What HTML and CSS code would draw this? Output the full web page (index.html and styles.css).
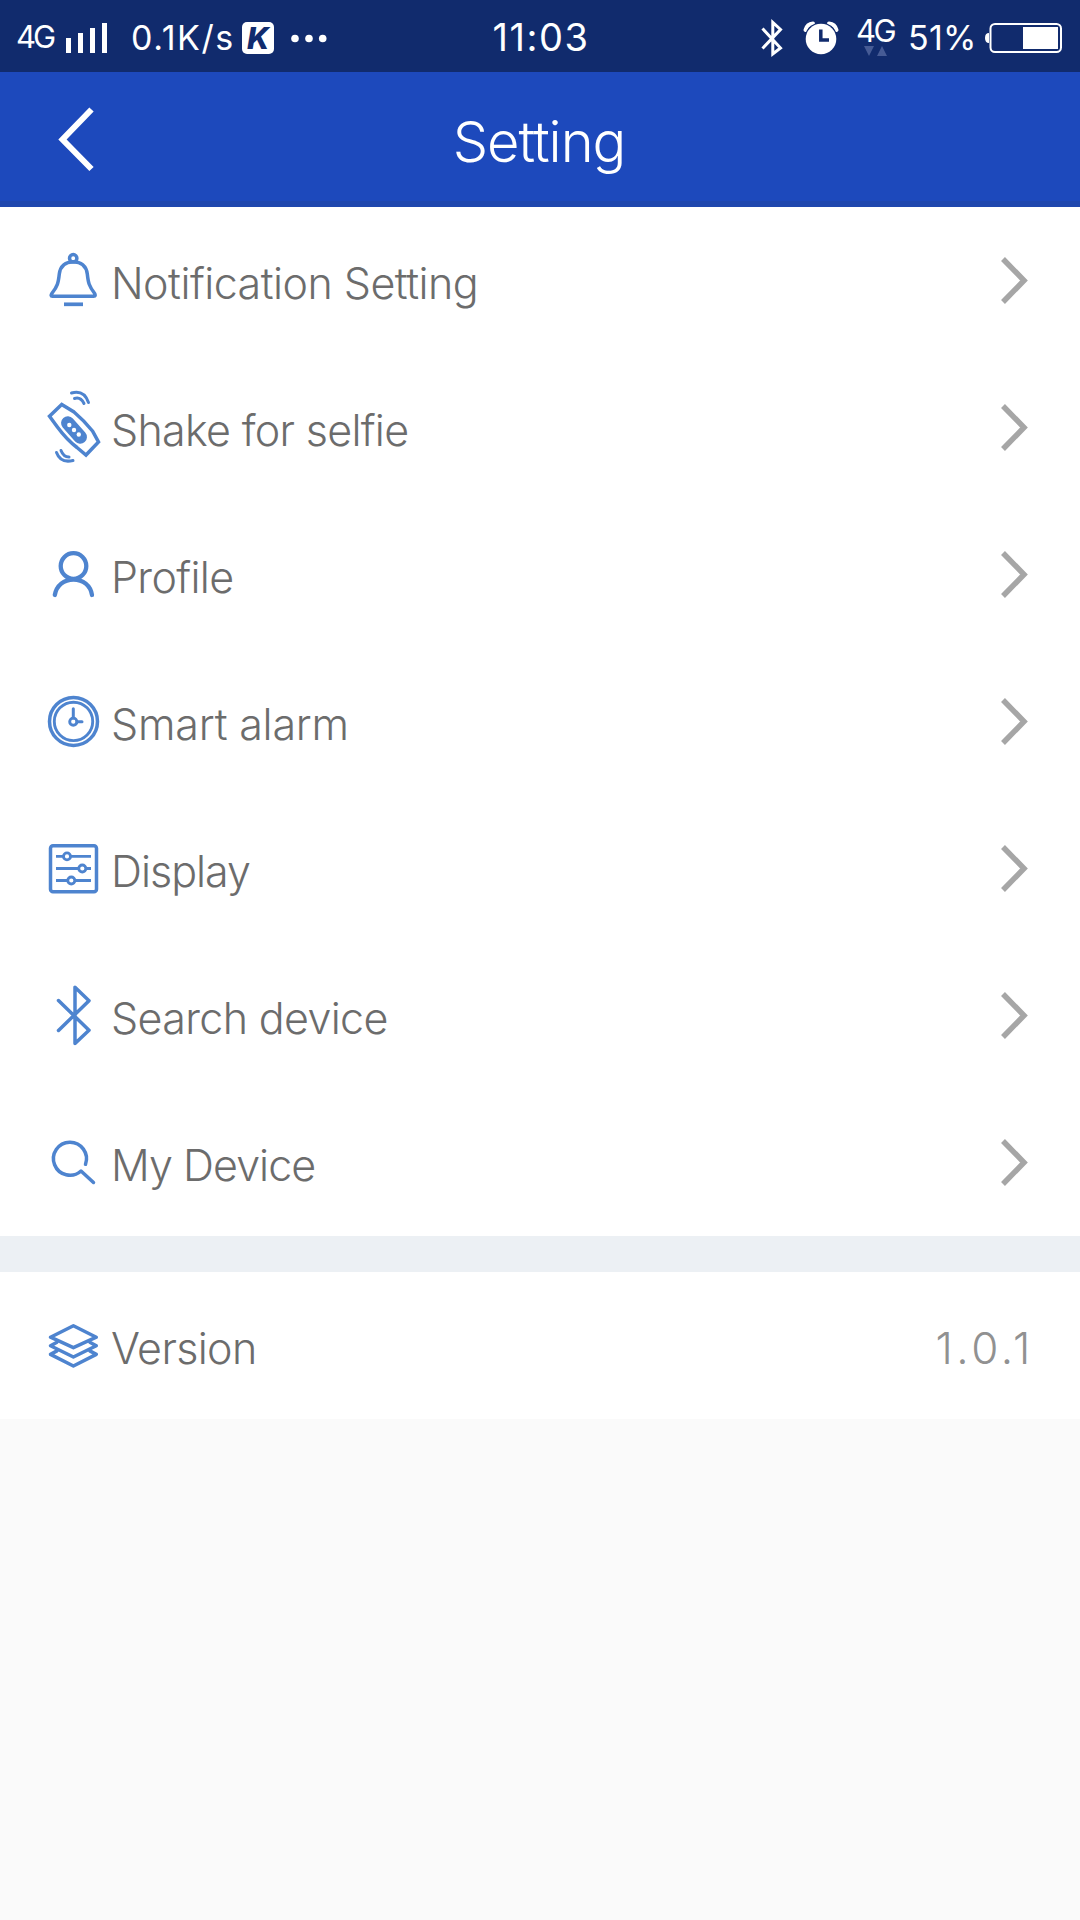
FILE: index.html
```html
<!DOCTYPE html>
<html lang="en">
<head>
    <meta charset="UTF-8">
    <meta name="viewport" content="width=device-width, initial-scale=1.0">
    <title>Setting</title>
    <link rel="stylesheet" href="styles.css">
</head>
<body>
    <div class="status-bar">
        <div class="status-left">
            <span class="network">4G</span>
            <svg class="signal" width="42" height="72" viewBox="0 0 42 72">
                <path d="M0 36h5v15H0zM12 31h5v20h-5zM24 26h5v25h-5zM36 21h5v30h-5z" fill="#fff"/>
            </svg>
            <span class="speed">0.1K/s</span>
            <span class="k-badge">K</span>
            <svg class="dots" width="36" height="72" viewBox="0 0 36 72" fill="#fff">
                <circle cx="4" cy="36.5" r="3.8"/>
                <circle cx="18" cy="36.5" r="3.8"/>
                <circle cx="31.7" cy="36.5" r="3.8"/>
            </svg>
        </div>
        <span class="time">11:03</span>
        <div class="status-right">
            <svg class="bt" width="24" height="72" viewBox="0 0 24 72" fill="none" stroke="#fff" stroke-width="3">
                <path d="M1.500 26.500L19.500 46 11.800 52V20.500L19.500 27.500 1.500 46.500"/>
            </svg>
            <svg class="alarm" width="36" height="72" viewBox="0 0 36 72">
                <path d="M2.500 28Q4 22 10 21.500M33.500 28Q32 22 26 21.500" fill="none" stroke="#fff" stroke-width="4" stroke-linecap="round"/>
                <circle cx="18" cy="37" r="16.500" fill="#112b6d"/>
                <circle cx="18" cy="37" r="15.300" fill="#fff"/>
                <path d="M17.800 27.500V38H26" fill="none" stroke="#112b6d" stroke-width="3.500"/>
            </svg>
            <div class="data">
                <span>4G</span>
                <svg width="24" height="10" viewBox="0 0 24 10" fill="#465b95">
                    <path d="M0 0h10L5 10zM13 10h10L18 0z"/>
                </svg>
            </div>
            <span class="percent">51%</span>
            <svg class="battery" width="78" height="72" viewBox="0 0 78 72">
                <path d="M4 31Q0 31 0 36t4 5z" fill="#fff"/>
                <rect x="5.500" y="22" width="70.500" height="28" rx="4.500" fill="none" stroke="#fff" stroke-width="2"/>
                <rect x="38" y="25" width="35" height="22" fill="#fff"/>
            </svg>
        </div>
    </div>

    <div class="header">
        <svg class="back" width="40" height="70" viewBox="0 0 40 70" fill="none" stroke="#fff" stroke-width="6">
            <path d="M35.500 5.500L6.500 35.500l29 29.500"/>
        </svg>
        <h1>Setting</h1>
    </div>

    <div class="list">
        <div class="row">
            <svg class="icon" viewBox="0 0 60 81">
                <circle cx="30.200" cy="18.300" r="3.700"/>
                <path d="M9.500 56.300H50.500C52.500 56.300 52.800 55.300 51.500 53.300C46 46 45.300 43 44.300 34C43.300 26 38 21.700 30.300 21.700S17.300 26 16.300 34C15.300 43 14.500 46 9 53.300C7.700 55.300 7.800 56.300 9.500 56.300z"/>
                <path d="M21 64.300h19" stroke-linecap="butt" stroke-width="3.700"/>
            </svg>
            <span class="label notification">Notification Setting</span>
            <svg class="arrow" viewBox="0 0 30 51"><path d="M3 4l21 21.500L3 47"/></svg>
        </div>
        <div class="row">
            <svg class="icon" viewBox="0 0 60 81">
                <path d="M18.700 17.500L6.500 29.200L14 39.500Q24 53 34 60.500L43 68L55.500 55L49.500 44Q41 33.500 31 25z" stroke-linejoin="miter"/>
                <path d="M24.800 36L37.200 50" stroke-width="13.500"/>
                <path d="M28.500 6Q41 2.500 45.500 15.500M31.500 11.500Q37.500 9.500 41 16.500M13.500 65.500Q17.500 76.500 30 73.500M18 63.500Q20.500 70 26 70" stroke-width="3"/>
                <g fill="#fff" stroke="none">
                    <circle cx="26.300" cy="38" r="2.200"/>
                    <circle cx="31" cy="43" r="2.200"/>
                    <circle cx="35.800" cy="47.500" r="2.200"/>
                </g>
            </svg>
            <span class="label shake">Shake for selfie</span>
            <svg class="arrow" viewBox="0 0 30 51"><path d="M3 4l21 21.500L3 47"/></svg>
        </div>
        <div class="row">
            <svg class="icon bold" viewBox="0 0 60 81">
                <circle cx="30.500" cy="32" r="12.800"/>
                <path d="M11.800 61C13.500 51.500 21 45.500 30.500 45.500S47.500 51.500 49 61"/>
            </svg>
            <span class="label profile">Profile</span>
            <svg class="arrow" viewBox="0 0 30 51"><path d="M3 4l21 21.500L3 47"/></svg>
        </div>
        <div class="row">
            <svg class="icon" viewBox="0 0 60 81">
                <circle cx="30.500" cy="40.400" r="24"/>
                <circle cx="30.500" cy="40.400" r="19.200" stroke-width="2.900"/>
                <circle cx="30.300" cy="40.700" r="3.600" stroke-width="2.900"/>
                <path d="M30.300 37V27.800M34 40.700h5" stroke-width="3"/>
            </svg>
            <span class="label smart">Smart alarm</span>
            <svg class="arrow" viewBox="0 0 30 51"><path d="M3 4l21 21.500L3 47"/></svg>
        </div>
        <div class="row">
            <svg class="icon" viewBox="0 0 60 81">
                <rect x="7.500" y="17.700" width="46" height="46" rx="2.500"/>
                <path d="M13 28.400h35M13 40.500h35M13 52.500h35" stroke-width="2.800" stroke-linecap="butt"/>
                <g fill="#fff" stroke-width="2.800">
                    <circle cx="24" cy="28.400" r="3.500"/>
                    <circle cx="39.300" cy="40.500" r="3.500"/>
                    <circle cx="28.300" cy="52.500" r="3.500"/>
                </g>
            </svg>
            <span class="label display">Display</span>
            <svg class="arrow" viewBox="0 0 30 51"><path d="M3 4l21 21.500L3 47"/></svg>
        </div>
        <div class="row">
            <svg class="icon" viewBox="0 0 60 81">
                <path d="M15.500 55.500L46 25.700L32 12.300V68.500L46 55.300L15.500 25.500"/>
            </svg>
            <span class="label search">Search device</span>
            <svg class="arrow" viewBox="0 0 30 51"><path d="M3 4l21 21.500L3 47"/></svg>
        </div>
        <div class="row">
            <svg class="icon" viewBox="0 0 60 81">
                <path d="M42.500 42.300A16.500 16.500 0 1 0 38 49L50.500 60.500"/>
            </svg>
            <span class="label device">My Device</span>
            <svg class="arrow" viewBox="0 0 30 51"><path d="M3 4l21 21.500L3 47"/></svg>
        </div>
    </div>

    <div class="list">
        <div class="row">
            <svg class="icon" viewBox="0 0 60 81">
                <path d="M30.400 20.700L53.300 32.200L30.400 42.700L7.500 32.200z"/>
                <path d="M14 37.200L7.500 40.700L30.400 52L53.300 40.700L46.800 37.200"/>
                <path d="M14 45.900L7.500 49.400L30.400 61L53.300 49.400L46.800 45.900"/>
            </svg>
            <span class="label version">Version</span>
            <span class="value">1.0.1</span>
        </div>
    </div>
</body>
</html>
```
FILE: styles.css
```css
* {
    box-sizing: border-box;
}
body {
    margin: 0;
    background: #fafafa;
    font-family: Inter, Roboto, sans-serif;
    color: #6c6c6c;
}
svg {
    display: block;
    flex-shrink: 0;
}
.status-bar {
    display: grid;
    grid-template-columns: 1fr auto 1fr;
    height: 72px;
    background: #112b6d;
    color: #fff;
    line-height: 72px;
    white-space: nowrap;
}
.status-left {
    display: flex;
    align-items: center;
    padding-left: 16px;
}
.status-right {
    display: flex;
    align-items: center;
    justify-content: flex-end;
    padding-right: 17px;
}
.network {
    width: 50px;
    height: 72px;
    font-size: 31px;
    letter-spacing: -3px;
    line-height: 69px;
}
.speed {
    width: 111px;
    margin-left: 23px;
    font-size: 34px;
    letter-spacing: 1.6px;
    line-height: 72px;
}
.k-badge {
    width: 32px;
    height: 32px;
    border-radius: 5px;
    background: #fff;
    color: #112b6d;
    font-size: 30px;
    font-weight: 800;
    font-style: italic;
    line-height: 32px;
    text-align: center;
}
.dots {
    margin-left: 17px;
}
.time {
    margin-left: 2px;
    font-size: 38px;
    letter-spacing: 1.5px;
    line-height: 75px;
}
.alarm {
    margin-left: 18px;
}
.data {
    width: 39px;
    margin-left: 17px;
    font-size: 31px;
    letter-spacing: -2.5px;
    line-height: 25px;
}
.data span {
    position: relative;
    top: -1px;
}
.data svg {
    margin-top: 2px;
    margin-left: 8px;
}
.percent {
    width: 68px;
    margin-left: 13px;
    font-size: 34px;
    letter-spacing: 0.3px;
    line-height: 72px;
}
.battery {
    margin-left: 9px;
}
.header {
    display: grid;
    grid-template-columns: 1fr auto 1fr;
    align-items: center;
    height: 135px;
    background: #1d49bc;
    border-bottom: 6px solid #1f47ae;
    color: #fff;
}
.back {
    margin-left: 56px;
    margin-top: 4px;
}
.header h1 {
    margin: 11px 2px 0 0;
    font-size: 56px;
    font-weight: 350;
    letter-spacing: -1px;
    line-height: 70px;
}
.list {
    margin-bottom: 36px;
    background: #fff;
    box-shadow: 0 36px 0 #ecf0f4;
}
.list:last-child {
    margin-bottom: 0;
    box-shadow: none;
}
.row {
    display: flex;
    align-items: center;
    height: 147px;
    padding: 0 50px 0 43px;
}
.icon {
    width: 60px;
    height: 81px;
    fill: none;
    stroke: #4e84cf;
    stroke-width: 3.5;
    stroke-linecap: round;
    stroke-linejoin: round;
}
.icon.bold {
    stroke-width: 4.3;
}
.label {
    flex: 1;
    margin-left: 8px;
    padding-top: 4px;
    font-size: 43px;
    font-weight: 350;
    line-height: 60px;
    white-space: nowrap;
}
.notification {
    letter-spacing: -0.53px;
}
.shake {
    letter-spacing: -0.7px;
}
.profile,
.search,
.version {
    letter-spacing: -0.65px;
}
.smart {
    letter-spacing: -0.2px;
}
.display {
    letter-spacing: -1px;
}
.device {
    letter-spacing: -0.95px;
}
.arrow {
    width: 30px;
    height: 51px;
    fill: none;
    stroke: #a6a6a6;
    stroke-width: 5.5;
}
.value {
    margin-right: -4px;
    padding-top: 4px;
    color: #919191;
    font-size: 44px;
    font-weight: 300;
    letter-spacing: 3.6px;
    line-height: 60px;
}
```
